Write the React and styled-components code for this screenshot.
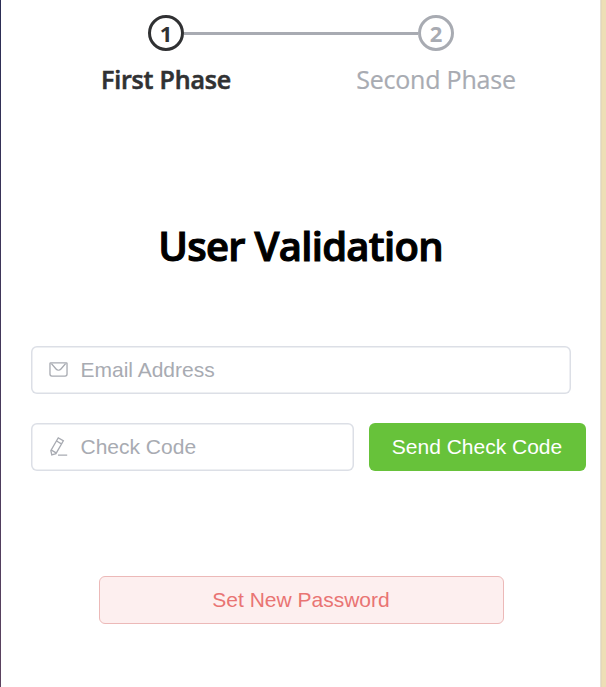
import React from "react";
import styled, { createGlobalStyle } from "styled-components";

const GlobalStyle = createGlobalStyle`
  *, *::before, *::after { box-sizing: border-box; }
  body { margin: 0; background: #fff; }
  input, button { font-family: "Liberation Sans", Arial, sans-serif; font-size: 21px; }
`;

const Page = styled.div`
  display: grid;
  grid-template-columns: 1px 600px 5px;
  width: 606px;
  height: 687px;
  overflow: hidden;
`;

const LeftEdge = styled.div`
  background: linear-gradient(#2b2d55, #5c4360);
`;

const RightEdge = styled.div`
  background: #eddfb6;
  border-left: 1px solid #e5d8b8;
`;

const Card = styled.main`
  display: flex;
  flex-direction: column;
  background: #fff;
  border-right: 1px solid #e6e1d3;
`;

const Steps = styled.div`
  display: grid;
  grid-template-columns: 270px 270px;
  margin: 15px 0 0 30px;
`;

const Step = styled.div`
  display: flex;
  flex-direction: column;
  align-items: center;
  color: ${(p) => (p.$active ? "#303133" : "#a8abb2")};
  font-family: "Open Sans", "Noto Sans", sans-serif;
  font-weight: ${(p) => (p.$active ? 600 : 400)};
`;

const Track = styled.div`
  display: grid;
  grid-template-columns: 1fr 36px 1fr;
  align-items: center;
  width: 100%;
`;

const Line = styled.div`
  height: 3px;
  background: ${(p) => (p.$visible ? "#a8abb2" : "transparent")};
`;

const StepNumber = styled.div`
  display: flex;
  align-items: center;
  justify-content: center;
  width: 36px;
  height: 36px;
  padding-bottom: 1px;
  border: 3px solid currentColor;
  border-radius: 50%;
  font-size: 22px;
  font-weight: 700;
  line-height: 1;
`;

const StepTitle = styled.div`
  font-size: 25px;
  line-height: 57px;
  letter-spacing: -0.2px;
  -webkit-text-stroke: ${(p) => (p.$bold ? "0.6px" : "0.2px")} currentColor;
  white-space: nowrap;
`;

const Title = styled.h1`
  margin: 108px 0 0;
  font-family: "Open Sans", "Noto Sans", sans-serif;
  font-size: 40px;
  font-weight: 600;
  line-height: 60px;
  letter-spacing: -0.7px;
  -webkit-text-stroke: 1.1px currentColor;
  text-align: center;
  color: #000;
`;

const Form = styled.form`
  display: flex;
  flex-direction: column;
  gap: 29px;
  margin: 70px 0 0 30px;
`;

const Row = styled.div`
  display: flex;
  gap: 15px;
`;

const Field = styled.label`
  display: flex;
  align-items: center;
  gap: 11.5px;
  width: ${(p) => p.$width}px;
  height: 48px;
  padding: 0 17px;
  border-radius: 6px;
  box-shadow: inset 0 0 0 1.5px #dcdfe6;
  color: #a8abb2;

  svg { flex: none; width: 21px; height: 21px; margin-top: -1px; fill: currentColor; }
`;

const Input = styled.input`
  flex: 1;
  min-width: 0;
  padding: 0;
  border: 0;
  outline: 0;
  background: transparent;
  color: #606266;
  &::placeholder { color: #a8abb2; opacity: 1; }
`;

const Button = styled.button`
  height: 48px;
  padding: 0 1px 0 0;
  border-radius: 6px;
  white-space: nowrap;
`;

const SendButton = styled(Button)`
  width: 217px;
  border: 0;
  background: #67c23a;
  color: #fff;
`;

const SubmitButton = styled(Button)`
  width: 405px;
  margin: 76px 0 0 68px;
  border: 1px solid #ecb9b8;
  background: #fdefef;
  color: #e97473;
`;

const MessageIcon = () => (
  <svg viewBox="0 0 1024 1024">
    <path d="M128 224v512a64 64 0 0 0 64 64h640a64 64 0 0 0 64-64V224zm0-64h768a64 64 0 0 1 64 64v512a128 128 0 0 1-128 128H192A128 128 0 0 1 64 736V224a64 64 0 0 1 64-64" />
    <path d="M904 224 656.512 506.88a192 192 0 0 1-289.024 0L120 224zm-698.944 0 210.56 240.704a128 128 0 0 0 192.704 0L818.944 224z" />
  </svg>
);

const EditPenIcon = () => (
  <svg viewBox="0 0 1024 1024">
    <path d="m199.04 672.64 193.984 112 224-387.968-193.92-112-224 388.032zm-23.872 60.16 32.896 148.288 144.896-45.696zM455.04 229.248l193.92 112 56.704-98.112-193.984-112-56.64 98.112zM104.32 708.8l384-665.024 304.768 175.936L409.152 884.8h.064l-248.448 78.336zm384 254.272v-64h448v64z" />
  </svg>
);

export default function App() {
  return (
    <Page>
      <GlobalStyle />
      <LeftEdge />
      <Card>
        <Steps>
          <Step $active>
            <Track>
              <Line />
              <StepNumber>1</StepNumber>
              <Line $visible />
            </Track>
            <StepTitle $bold>First Phase</StepTitle>
          </Step>
          <Step>
            <Track>
              <Line $visible />
              <StepNumber>2</StepNumber>
              <Line />
            </Track>
            <StepTitle>Second Phase</StepTitle>
          </Step>
        </Steps>
        <Title>User Validation</Title>
        <Form onSubmit={(e) => e.preventDefault()}>
          <Field $width={540}>
            <MessageIcon />
            <Input placeholder="Email Address" />
          </Field>
          <Row>
            <Field $width={323}>
              <EditPenIcon />
              <Input placeholder="Check Code" />
            </Field>
            <SendButton type="button">Send Check Code</SendButton>
          </Row>
          <SubmitButton type="submit">Set New Password</SubmitButton>
        </Form>
      </Card>
      <RightEdge />
    </Page>
  );
}
